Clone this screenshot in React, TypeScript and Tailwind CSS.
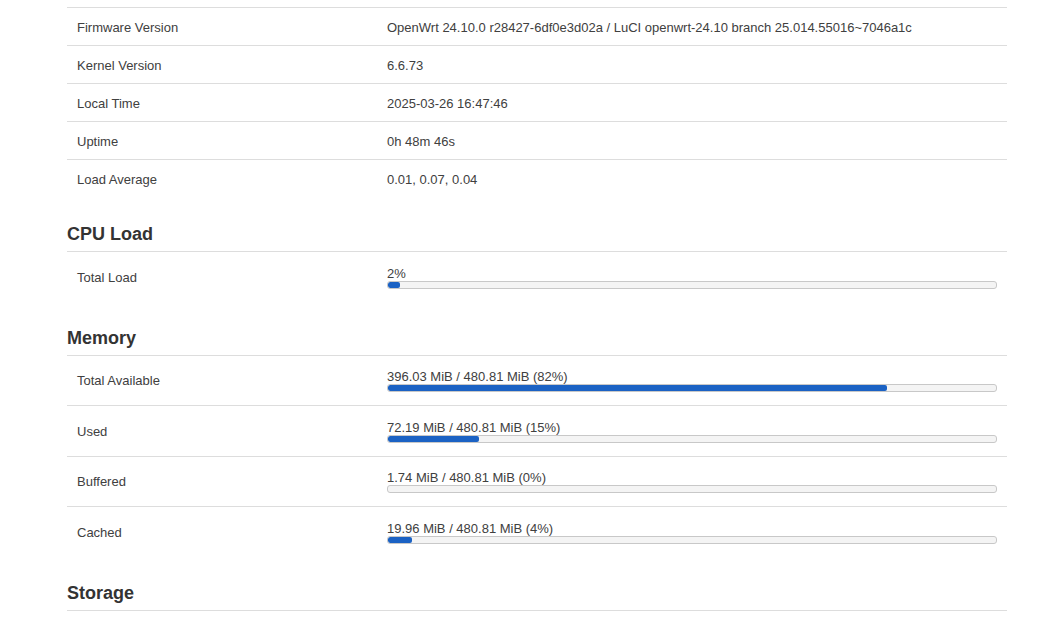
import React from 'react';

const info: [string, string][] = [
  ['Firmware Version', 'OpenWrt 24.10.0 r28427-6df0e3d02a / LuCI openwrt-24.10 branch 25.014.55016~7046a1c'],
  ['Kernel Version', '6.6.73'],
  ['Local Time', '2025-03-26 16:47:46'],
  ['Uptime', '0h 48m 46s'],
  ['Load Average', '0.01, 0.07, 0.04'],
];

const memory: [string, string, number][] = [
  ['Total Available', '396.03 MiB / 480.81 MiB (82%)', 82],
  ['Used', '72.19 MiB / 480.81 MiB (15%)', 15],
  ['Buffered', '1.74 MiB / 480.81 MiB (0%)', 0],
  ['Cached', '19.96 MiB / 480.81 MiB (4%)', 4],
];

function Heading({ children }: { children: React.ReactNode }) {
  return (
    <h3 className="mt-[26px] pb-[7px] text-[18px] leading-[20px] font-bold text-[#333] border-b border-[#ddd]">
      {children}
    </h3>
  );
}

function Bar({ label, pct }: { label: string; pct: number }) {
  return (
    <div>
      <div className="leading-[15px]">{label}</div>
      <div className="h-[8px] rounded-[3px] border border-[#c8c8c8] bg-[#f4f4f4] overflow-hidden">
        <div className="h-full rounded-[2px] bg-[#1b62c4]" style={{ width: `${pct}%` }} />
      </div>
    </div>
  );
}

function BarRow({ name, label, pct, last, tall }: { name: string; label: string; pct: number; last?: boolean; tall?: boolean }) {
  return (
    <div className={`grid grid-cols-[310px_1fr] items-center ${tall ? 'h-[51px]' : 'h-[50px]'} ${last ? '' : 'border-b border-[#ddd]'}`}>
      <div className="px-[10px] pt-[1px]">{name}</div>
      <div className="px-[10px]">
        <Bar label={label} pct={pct} />
      </div>
    </div>
  );
}

export default function App() {
  return (
    <div className="w-[1060px] h-[617px] overflow-hidden bg-white text-[13px] text-[#404040]" style={{ fontFamily: '"Liberation Sans", Arial, sans-serif' }}>
      <div className="ml-[67px] w-[940px] pt-[7px]">
        <div className="border-t border-[#ddd]">
          {info.map(([k, v], i) => (
            <div key={k} className={`grid grid-cols-[310px_1fr] items-center h-[38px] pt-[2px] ${i < info.length - 1 ? 'border-b border-[#ddd]' : ''}`}>
              <div className="px-[10px]">{k}</div>
              <div className="px-[10px]">{v}</div>
            </div>
          ))}
        </div>

        <Heading>CPU Load</Heading>
        <BarRow name="Total Load" label="2%" pct={2} last />

        <Heading>Memory</Heading>
        {memory.map(([n, l, p], i) => (
          <BarRow key={n} name={n} label={l} pct={p} tall={i === 1} last={i === memory.length - 1} />
        ))}

        <Heading>Storage</Heading>
      </div>
    </div>
  );
}
